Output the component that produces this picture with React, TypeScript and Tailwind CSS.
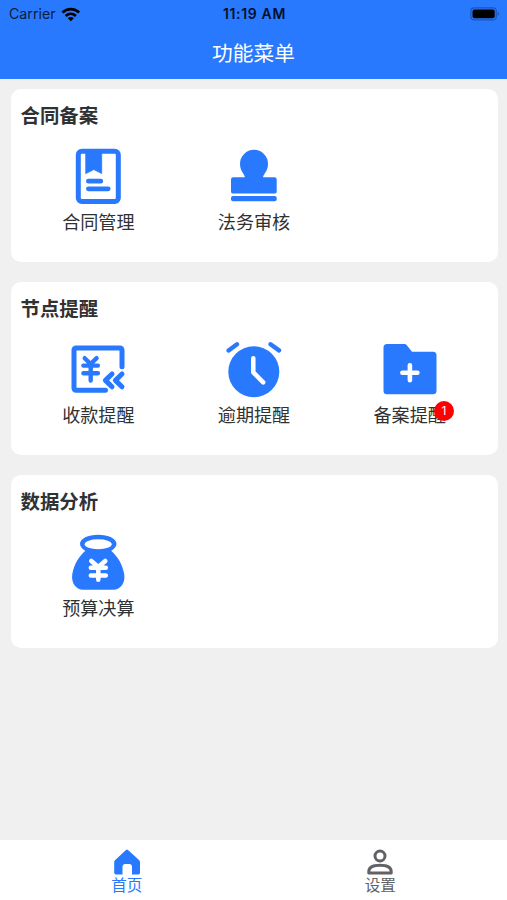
import type { ReactNode } from "react";

const BLUE = "#2979ff";

function Icon({ children }: { children: ReactNode }) {
  return (
    <svg viewBox="0 0 64 64" className="block h-16 w-16 shrink-0" fill="none" strokeLinecap="round" strokeLinejoin="round">
      {children}
    </svg>
  );
}

const ContractIcon = () => (
  <Icon>
    <rect x="12.3" y="7.3" width="40" height="50.2" rx="3.5" stroke={BLUE} strokeWidth="5" />
    <path d="M20 7H35.7V29.5L27.8 25.6L20 29.5Z" fill={BLUE} stroke={BLUE} strokeWidth="0.8" />
    <path d="M22.4 37.2H34.8M22.4 44.8H42.2" stroke={BLUE} strokeWidth="4.8" />
  </Icon>
);

const StampIcon = () => (
  <Icon>
    <path
      d="M22.9 33.3C22.9 30.5 18 27.5 18 19.8A14 14 0 0 1 46 19.8C46 27.5 41.1 30.5 41.1 33.3H52.5A2.2 2.2 0 0 1 54.7 35.5V47.8A1.6 1.6 0 0 1 53.1 49.4H10.6A1.6 1.6 0 0 1 9 47.8V35.5A2.2 2.2 0 0 1 11.2 33.3Z"
      fill={BLUE}
    />
    <rect x="9" y="52" width="45.7" height="5.3" rx="2" fill={BLUE} />
  </Icon>
);

const ReceiptIcon = () => (
  <Icon>
    <g stroke={BLUE} strokeWidth="5">
      <path d="M39.5 53.3H10A2 2 0 0 1 8 51.3V13A2 2 0 0 1 10 11H54A2 2 0 0 1 56 13V29.8" />
      <path d="M18.7 21.2L24.6 27L30.6 21.2M17.4 28.6H31.9M17.4 36.2H31.9M24.7 28V43.6" strokeWidth="4.4" />
      <path d="M46 37L39.4 43.4L46 49.8M56 37L49.4 43.4L56 49.8" />
    </g>
  </Icon>
);

const AlarmIcon = () => (
  <Icon>
    <circle cx="31.8" cy="34.7" r="25.5" fill={BLUE} />
    <path d="M6.6 13.4L15 7.2M48.5 7.2L57 13.4" stroke={BLUE} strokeWidth="4.4" />
    <path d="M31.3 21.3V35.4L41.2 45.3" stroke="white" strokeWidth="4.5" />
  </Icon>
);

const FolderIcon = () => (
  <Icon>
    <path
      d="M9 7H26C27.2 7 28.2 7.5 29 8.4L34 14.7H55A3.5 3.5 0 0 1 58.5 18.2V53.8A3.5 3.5 0 0 1 55 57.3H9A3.5 3.5 0 0 1 5.5 53.8V10.5A3.5 3.5 0 0 1 9 7Z"
      fill={BLUE}
    />
    <path d="M24.4 35.8H39.4M31.9 28.3V43.3" stroke="white" strokeWidth="4.6" />
  </Icon>
);

const MoneyBagIcon = () => (
  <Icon>
    <path
      d="M14 13.8C14 8.5 22 4.7 32.2 4.7S50.5 8.5 50.5 13.8C50.5 16.5 48.5 19 45.2 20.7C51.5 26.5 56.5 34 58.2 44C59.6 53 54.5 59.7 47.5 59.7H17C10 59.7 4.9 53 6.3 44C8 34 13 26.5 19.3 20.7C16 19 14 16.5 14 13.8Z"
      fill={BLUE}
    />
    <ellipse cx="32.2" cy="14.3" rx="13.5" ry="5" fill="white" />
    <path d="M25.3 31L32.3 37L39.3 31M24.8 37.8H39.8M24.8 45.4H39.8M32.3 37V49.7" stroke="white" strokeWidth="4.5" />
  </Icon>
);

type Entry = { label: string; icon: ReactNode; badge?: number };
const sections: { title: string; items: Entry[] }[] = [
  {
    title: "合同备案",
    items: [
      { label: "合同管理", icon: <ContractIcon /> },
      { label: "法务审核", icon: <StampIcon /> },
    ],
  },
  {
    title: "节点提醒",
    items: [
      { label: "收款提醒", icon: <ReceiptIcon /> },
      { label: "逾期提醒", icon: <AlarmIcon /> },
      { label: "备案提醒", icon: <FolderIcon />, badge: 1 },
    ],
  },
  { title: "数据分析", items: [{ label: "预算决算", icon: <MoneyBagIcon /> }] },
];

function StatusBar() {
  return (
    <div className="grid h-7 grid-cols-3 items-center pl-[9px] pr-[7px] font-['Inter','Liberation_Sans',sans-serif] text-black">
      <div className="flex items-center gap-[5px] text-[14.2px] leading-7 text-[#0b1c3c]">
        <span>Carrier</span>
        <svg viewBox="0 0 20 15" className="h-[15px] w-5" fill="none" stroke="black" strokeWidth="2.7">
          <path d="M1.4 5.5C6.2 0.9 13.4 0.9 18.2 5.5" />
          <path d="M4.7 8.9C7.7 6.1 11.9 6.1 14.9 8.9" />
          <path d="M9.8 14.3L6.7 11.2C8.5 9.6 11.1 9.6 12.9 11.2Z" fill="black" stroke="none" />
        </svg>
      </div>
      <div className="whitespace-nowrap text-center text-[14px] font-semibold leading-7 tracking-[0.65px] text-[#04102a]">11:19 AM</div>
      <svg viewBox="0 0 30 14" className="h-3.5 w-[30px] justify-self-end">
        <rect x="0.9" y="0.9" width="25.4" height="12" rx="3.5" fill="none" stroke="#1c55b5" strokeWidth="1.2" />
        <rect x="2.5" y="2.5" width="22.2" height="8.8" rx="2" fill="black" />
        <path d="M27.7 4.8C29.4 5.5 29.4 8.4 27.7 9.1Z" fill="#1c55b5" />
      </svg>
    </div>
  );
}

export default function App() {
  return (
    <div className="flex h-[900px] w-[507px] flex-col overflow-hidden bg-[#f0f0f0] font-['Noto_Sans_CJK_SC',sans-serif] text-[#303133]">
      <header className="h-[79px] shrink-0 bg-[#2979ff]">
        <StatusBar />
        <h1 className="text-center text-[20.7px] leading-[49px] text-white">功能菜单</h1>
      </header>
      <main className="flex flex-1 flex-col gap-[19.5px] pl-[10.5px] pr-[9.5px] pt-[9.5px]">
        {sections.map((section) => (
          <section key={section.title} className="h-[173.5px] rounded-[10px] bg-white">
            <h2 className="h-[55px] pl-[10px] text-[19.4px] font-bold leading-[52px]">{section.title}</h2>
            <div className="grid grid-cols-3 px-[10px]">
              {section.items.map((item) => (
                <div key={item.label} className="flex flex-col items-center">
                  {item.icon}
                  <div className="relative text-[18.1px] leading-[26px]">
                    {item.label}
                    {item.badge && (
                      <span className="absolute -right-2 top-[0.5px] flex h-5 w-5 items-center justify-center rounded-full bg-[#ff0000] font-['Inter','Liberation_Sans',sans-serif] text-[12px] leading-none text-white">
                        {item.badge}
                      </span>
                    )}
                  </div>
                </div>
              ))}
            </div>
          </section>
        ))}
      </main>
      <nav className="grid h-[60px] shrink-0 grid-cols-2 bg-white text-[15.6px] leading-[18px]">
        <div className="flex flex-col items-center pt-[9px] text-[#2979ff]">
          <svg viewBox="0 0 28 26" className="h-[26px] w-7">
            <path d="M13 0.9Q14 0.2 15 0.9L26 11Q27 12 27 13.2V23.8Q27 25.5 25.5 25.5H19V17.5Q19 15 16.7 15H11.8Q9.5 15 9.5 17.5V25.5H2.8Q1.2 25.5 1.2 23.8V13.2Q1.2 12 2.2 11Z" fill={BLUE} />
          </svg>
          <span>首页</span>
        </div>
        <div className="flex flex-col items-center pt-[9px] text-[#606266]">
          <svg viewBox="0 0 28 26" className="h-[26px] w-7" fill="none" stroke="#606266" strokeWidth="3">
            <circle cx="14" cy="7" r="5" />
            <path d="M2.8 24V22.5C2.8 18 8 16.2 14 16.2S25.2 18 25.2 22.5V24Z" strokeLinejoin="round" />
          </svg>
          <span>设置</span>
        </div>
      </nav>
    </div>
  );
}
